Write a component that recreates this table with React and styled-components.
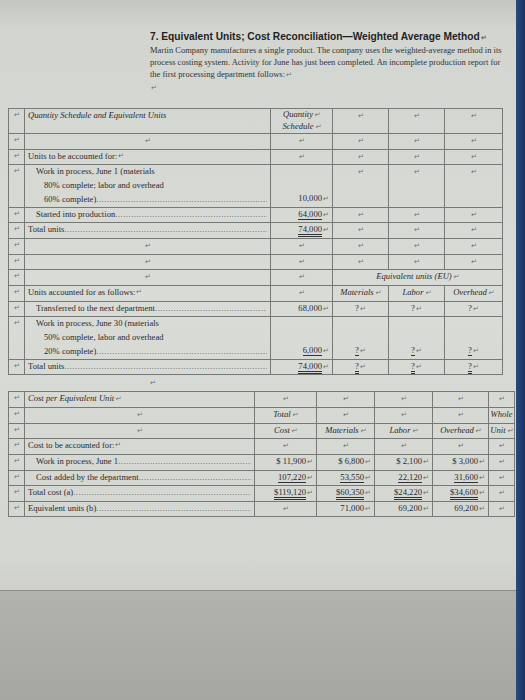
import React from 'react';
import styled, { createGlobalStyle } from 'styled-components';

const Global = createGlobalStyle`
  html, body { margin: 0; padding: 0; }
  body {
    width: 525px; height: 700px; overflow: hidden;
    font-family: "Liberation Serif", "Times New Roman", serif;
    color: #2a2a2a;
  }
`;

const Page = styled.div`
  display: flex;
  width: 525px;
  height: 700px;
`;

const Paper = styled.div`
  flex: 1;
  display: flex;
  flex-direction: column;
`;

const Sheet = styled.div`
  height: 590px;
  box-sizing: border-box;
  padding: 30px 0 0 8px;
  background: linear-gradient(180deg, #c4c6c2 0px, #d3d5d1 30px, #d9dbd7 300px, #d4d6d2 560px, #cfd0cc 590px);
  display: flex;
  flex-direction: column;
`;

const Desk = styled.div`
  flex: 1;
  border-top: 1px solid #8f908c;
  background: linear-gradient(180deg, #b2b3af, #a6a7a3);
`;

const Edge = styled.div`
  width: 9px;
  background: linear-gradient(90deg, #2a4a80, #183260);
`;

const Intro = styled.div`
  padding-left: 142px;
  padding-right: 4px;
  display: flex;
  flex-direction: column;
`;

const Title = styled.div`
  font-family: "Liberation Sans", Arial, sans-serif;
  font-weight: bold;
  font-size: 10.2px;
  line-height: 13px;
  white-space: nowrap;
  color: #1f1f1f;
`;

const Para = styled.div`
  font-size: 8.5px;
  line-height: 12px;
  white-space: nowrap;
  color: #333;
`;

const Mark = styled.span`
  font-size: 7px;
  color: #6a6c6a;
  margin-left: 1px;
`;

const Table = styled.table`
  border-collapse: collapse;
  table-layout: fixed;
  width: ${(p) => p.$w}px;
  margin-top: ${(p) => p.$top}px;
  font-size: 8.6px;
  line-height: ${(p) => p.$lh}px;
`;

const Cell = styled.td`
  border: 1px solid #777977;
  padding: 0 3px;
  height: ${(p) => p.$h || 12}px;
  vertical-align: ${(p) => (p.$bottom ? 'bottom' : 'top')};
  text-align: ${(p) => p.$align || 'left'};
  font-style: ${(p) => (p.$italic ? 'italic' : 'normal')};
  white-space: nowrap;
  overflow: hidden;
  color: #2a2a2a;
`;

const MarkCell = styled.td`
  border: 1px solid #777977;
  padding: 0;
  text-align: center;
  vertical-align: top;
  font-size: 7px;
  color: #6a6c6a;
`;

const Label = styled.div`
  display: flex;
  padding-left: ${(p) => p.$indent || 0}px;
`;

const LabelText = styled.span`
  flex: none;
`;

const Leader = styled.span`
  flex: 1;
  overflow: hidden;
  white-space: nowrap;
  letter-spacing: 0.5px;
  color: #555;
  &::after {
    content: "..........................................................................................................";
  }
`;

const Value = styled.span`
  display: inline-block;
  border-bottom: ${(p) => (p.$line === 'double' ? '3px double #333' : p.$line === 'single' ? '1px solid #333' : 'none')};
  line-height: 10px;
  padding-bottom: ${(p) => (p.$line ? 0 : 1)}px;
`;

const Gap = styled.div`
  padding-left: 142px;
  height: 16px;
  font-size: 7px;
  line-height: 16px;
  color: #6a6c6a;
`;

const R = '\u21B5';

function M() {
  return <MarkCell>{R}</MarkCell>;
}

function E({ n = 1 }) {
  return (
    <>
      {Array.from({ length: n }).map((_, i) => (
        <Cell key={i} $align="center"><Mark>{R}</Mark></Cell>
      ))}
    </>
  );
}

function V({ children, line, align = 'right' }) {
  return (
    <Cell $align={align} $bottom>
      <Value $line={line}>{children}</Value>
      <Mark>{R}</Mark>
    </Cell>
  );
}

function Q({ line }) {
  return (
    <Cell $align="center" $bottom>
      <Value $line={line}>?</Value>
      <Mark>{R}</Mark>
    </Cell>
  );
}

function L({ text, indent, leader = true, italic, lines }) {
  if (lines) {
    return (
      <Cell $italic={italic}>
        {lines.map((ln, i) => (
          <Label key={i} $indent={i === 0 ? indent : indent + 8}>
            <LabelText>{ln}</LabelText>
            {i === lines.length - 1 && <Leader />}
          </Label>
        ))}
      </Cell>
    );
  }
  return (
    <Cell $italic={italic}>
      <Label $indent={indent}>
        <LabelText>{text}</LabelText>
        {leader ? <Leader /> : <Mark>{R}</Mark>}
      </Label>
    </Cell>
  );
}

function QuantityTable() {
  return (
    <Table $w={494} $top={14} $lh={13.7}>
      <colgroup>
        <col style={{ width: 16 }} />
        <col style={{ width: 246 }} />
        <col style={{ width: 62 }} />
        <col style={{ width: 56 }} />
        <col style={{ width: 56 }} />
        <col style={{ width: 58 }} />
      </colgroup>
      <tbody>
        <tr>
          <M />
          <Cell $italic $h={24}>Quantity Schedule and Equivalent Units</Cell>
          <Cell $italic $align="center" $h={24}>
            <div style={{ lineHeight: '11px' }}>Quantity<Mark>{R}</Mark></div>
            <div style={{ lineHeight: '11px' }}>Schedule<Mark>{R}</Mark></div>
          </Cell>
          <E n={3} />
        </tr>
        <tr><M /><E n={5} /></tr>
        <tr>
          <M />
          <L text="Units to be accounted for:" leader={false} />
          <E n={4} />
        </tr>
        <tr>
          <M />
          <L indent={8} lines={['Work in process, June 1 (materials', '80% complete; labor and overhead', '60% complete)']} />
          <V>10,000</V>
          <E n={3} />
        </tr>
        <tr>
          <M />
          <L indent={8} text="Started into production" />
          <V line="single">64,000</V>
          <E n={3} />
        </tr>
        <tr>
          <M />
          <L text="Total units" />
          <V line="double">74,000</V>
          <E n={3} />
        </tr>
        <tr><M /><E n={5} /></tr>
        <tr><M /><E n={5} /></tr>
        <tr>
          <M />
          <E n={2} />
          <Cell colSpan={3} $italic $align="center">Equivalent units (EU)<Mark>{R}</Mark></Cell>
        </tr>
        <tr>
          <M />
          <L text="Units accounted for as follows:" leader={false} />
          <E n={1} />
          <Cell $italic $align="center">Materials<Mark>{R}</Mark></Cell>
          <Cell $italic $align="center">Labor<Mark>{R}</Mark></Cell>
          <Cell $italic $align="center">Overhead<Mark>{R}</Mark></Cell>
        </tr>
        <tr>
          <M />
          <L indent={8} text="Transferred to the next department" />
          <V>68,000</V>
          <Q /><Q /><Q />
        </tr>
        <tr>
          <M />
          <L indent={8} lines={['Work in process, June 30 (materials', '50% complete, labor and overhead', '20% complete)']} />
          <V line="single">6,000</V>
          <Q line="single" /><Q line="single" /><Q line="single" />
        </tr>
        <tr>
          <M />
          <L text="Total units" />
          <V line="double">74,000</V>
          <Q line="double" /><Q line="double" /><Q line="double" />
        </tr>
      </tbody>
    </Table>
  );
}

function CostTable() {
  return (
    <Table $w={506} $top={0} $lh={13.6}>
      <colgroup>
        <col style={{ width: 16 }} />
        <col style={{ width: 230 }} />
        <col style={{ width: 62 }} />
        <col style={{ width: 58 }} />
        <col style={{ width: 58 }} />
        <col style={{ width: 56 }} />
        <col style={{ width: 26 }} />
      </colgroup>
      <tbody>
        <tr>
          <M />
          <Cell $italic $h={15}>Cost per Equivalent Unit<Mark>{R}</Mark></Cell>
          <E n={5} />
        </tr>
        <tr>
          <M />
          <E n={1} />
          <Cell $italic $align="center">Total<Mark>{R}</Mark></Cell>
          <E n={3} />
          <Cell $italic $align="center" style={{ padding: 0 }}>Whole</Cell>
        </tr>
        <tr>
          <M />
          <E n={1} />
          <Cell $italic $align="center">Cost<Mark>{R}</Mark></Cell>
          <Cell $italic $align="center">Materials<Mark>{R}</Mark></Cell>
          <Cell $italic $align="center">Labor<Mark>{R}</Mark></Cell>
          <Cell $italic $align="center">Overhead<Mark>{R}</Mark></Cell>
          <Cell $italic $align="center" style={{ padding: 0 }}>Unit<Mark>{R}</Mark></Cell>
        </tr>
        <tr>
          <M />
          <L text="Cost to be accounted for:" leader={false} />
          <E n={5} />
        </tr>
        <tr>
          <M />
          <L indent={8} text="Work in process, June 1" />
          <V>$ 11,900</V>
          <V>$ 6,800</V>
          <V>$ 2,100</V>
          <V>$ 3,000</V>
          <E n={1} />
        </tr>
        <tr>
          <M />
          <L indent={8} text="Cost added by the department" />
          <V line="single">107,220</V>
          <V line="single">53,550</V>
          <V line="single">22,120</V>
          <V line="single">31,600</V>
          <E n={1} />
        </tr>
        <tr>
          <M />
          <L text="Total cost (a)" />
          <V line="double">$119,120</V>
          <V line="double">$60,350</V>
          <V line="double">$24,220</V>
          <V line="double">$34,600</V>
          <E n={1} />
        </tr>
        <tr>
          <M />
          <L text="Equivalent units (b)" />
          <E n={1} />
          <V>71,000</V>
          <V>69,200</V>
          <V>69,200</V>
          <E n={1} />
        </tr>
      </tbody>
    </Table>
  );
}

export default function App() {
  return (
    <>
      <Global />
      <Page>
        <Paper>
          <Sheet>
            <Intro>
              <Title>7. Equivalent Units; Cost Reconciliation—Weighted Average Method<Mark>{R}</Mark></Title>
              <Para>Martin Company manufactures a single product. The company uses the weighted-average method in its</Para>
              <Para>process costing system. Activity for June has just been completed. An incomplete production report for</Para>
              <Para>the first processing department follows:<Mark>{R}</Mark></Para>
              <Para><Mark>{R}</Mark></Para>
            </Intro>
            <QuantityTable />
            <Gap>{R}</Gap>
            <CostTable />
          </Sheet>
          <Desk />
        </Paper>
        <Edge />
      </Page>
    </>
  );
}
